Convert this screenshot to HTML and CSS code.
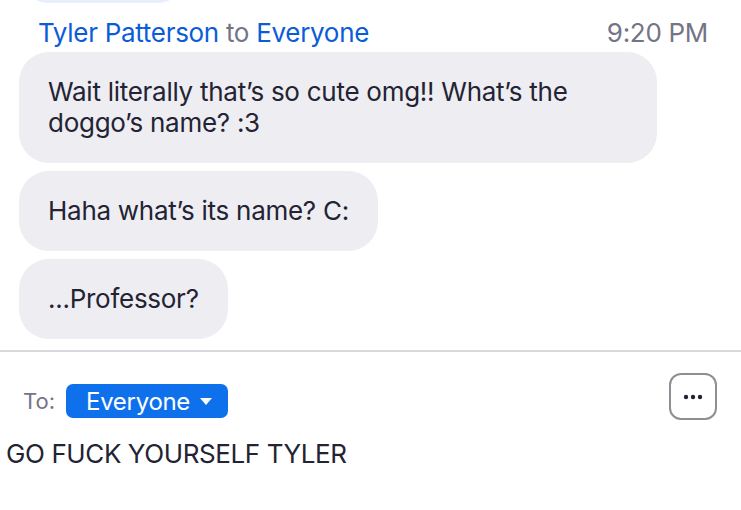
FILE: index.html
```html
<!DOCTYPE html>
<html lang="en">
<head>
  <meta charset="UTF-8">
  <meta name="viewport" content="width=device-width, initial-scale=1.0">
  <title>Chat</title>
  <link rel="stylesheet" href="styles.css">
</head>
<body>

  <div class="chat">
    <div class="bubble bubble-own"></div>

    <div class="msg-header">
      <span class="sender">Tyler Patterson <span class="to">to</span> Everyone</span>
      <span class="time">9:20 PM</span>
    </div>

    <div class="bubble">
      <p>Wait literally that’s so cute omg!! What’s the doggo’s name? :3</p>
    </div>
    <div class="bubble">
      <p>Haha what’s its name? C:</p>
    </div>
    <div class="bubble">
      <p>...Professor?</p>
    </div>
  </div>

  <div class="composer">
    <div class="to-row">
      <div class="recipient">
        <span class="to-label">To:</span>
        <button class="recipient-pill">
          Everyone
          <svg class="caret" width="12" height="7" viewBox="0 0 12 7">
            <path d="M0 0 H12 L6 7 Z" fill="#fff"/>
          </svg>
        </button>
      </div>
      <button class="more-button">
        <svg width="20" height="6" viewBox="0 0 20 6">
          <circle cx="3" cy="3" r="2.2" fill="#232333"/>
          <circle cx="10" cy="3" r="2.2" fill="#232333"/>
          <circle cx="17" cy="3" r="2.2" fill="#232333"/>
        </svg>
      </button>
    </div>
    <div class="input">GO FUCK YOURSELF TYLER</div>
  </div>

</body>
</html>
```

FILE: styles.css
```css
body {
  margin: 0;
  font-family: Inter, "Noto Sans", sans-serif;
  color: #232333;
  background-color: #fff;
}

.chat {
  height: 339px;
  padding: 0 0 11px 19px;
  display: flex;
  flex-direction: column;
  justify-content: flex-end;
  align-items: flex-start;
  overflow: hidden;
  border-bottom: 2px solid #d8d8dd;
}

.bubble {
  background-color: #ededf2;
  border-radius: 30px;
  padding: 24px 29px 25px;
  margin-top: 8px;
  max-width: 580px;
}

.bubble p {
  margin: 0;
  font-size: 26px;
  line-height: 31px;
  letter-spacing: -0.27px;
}

.bubble-own {
  background-color: #e6effc;
  width: 110px;
  min-height: 40px;
  flex-shrink: 0;
}

.msg-header {
  align-self: stretch;
  display: flex;
  justify-content: space-between;
  padding: 15px 33px 4px 19px;
  font-size: 26px;
  line-height: 30px;
  letter-spacing: -0.3px;
}

.msg-header + .bubble {
  margin-top: 0;
}

.sender {
  color: #0b5cd7;
}

.to,
.time {
  color: #747487;
}

.composer {
  padding: 21px 24px 0 6px;
}

.to-row {
  display: flex;
  justify-content: space-between;
  align-items: flex-start;
}

.recipient {
  display: flex;
  align-items: center;
  gap: 11px;
  margin-top: 11px;
  padding-left: 17px;
}

.to-label {
  font-size: 22px;
  color: #747487;
}

.recipient-pill {
  display: flex;
  align-items: center;
  gap: 10px;
  height: 34px;
  padding: 0 16px 0 20px;
  border: none;
  border-radius: 7px;
  background-color: #0e71eb;
  color: #fff;
  font-family: Inter, "Noto Sans", sans-serif;
  font-size: 24px;
  letter-spacing: -0.3px;
}

.more-button {
  width: 48px;
  height: 47px;
  border: 2px solid #8e8e94;
  border-radius: 12px;
  background: #fff;
  display: flex;
  align-items: center;
  justify-content: center;
  padding: 0;
}

.input {
  margin-top: 19px;
  font-size: 26px;
  line-height: 30px;
  letter-spacing: -0.4px;
}
```
